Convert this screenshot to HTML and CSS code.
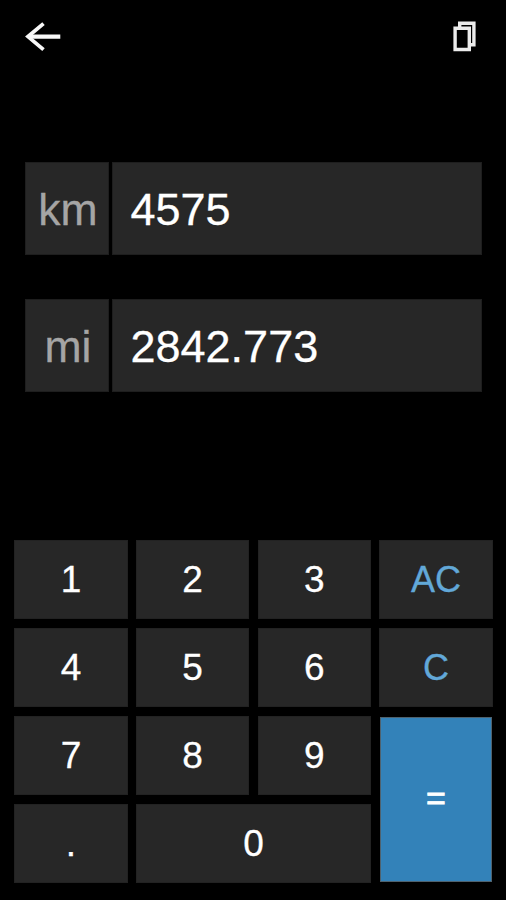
FILE: index.html
```html
<!DOCTYPE html>
<html lang="en">

<head>
    <meta charset="UTF-8">
    <meta name="viewport" content="width=device-width, initial-scale=1.0">
    <title>Unit Converter</title>
    <link rel="stylesheet" href="styles.css">
</head>

<body>
    <div class="app">
        <header class="topbar">
            <button class="icon-btn" aria-label="Back">
                <svg width="36" height="30" viewBox="0 0 36 30" fill="none" stroke="#f8f8f8">
                    <path d="M35.3 14.6H3" stroke-width="4.4" />
                    <path d="M18.5 1.6L3 14.6l15.5 13" stroke-width="3.8" />
                </svg>
            </button>
            <button class="icon-btn" aria-label="Copy">
                <svg width="24" height="31" viewBox="0 0 24 31" fill="none" stroke="#ececec" stroke-width="3.4">
                    <path d="M6.7 6V2.3h14.2v21.5H18" />
                    <path d="M2.1 7.3h14.2v21.2H2.1z" />
                </svg>
            </button>
        </header>

        <main class="fields">
            <div class="field">
                <div class="unit">km</div>
                <div class="value">4575</div>
            </div>
            <div class="field">
                <div class="unit">mi</div>
                <div class="value">2842.773</div>
            </div>
        </main>

        <div class="keypad">
            <button class="key">1</button>
            <button class="key">2</button>
            <button class="key">3</button>
            <button class="key clear">AC</button>
            <button class="key">4</button>
            <button class="key">5</button>
            <button class="key">6</button>
            <button class="key clear">C</button>
            <button class="key">7</button>
            <button class="key">8</button>
            <button class="key">9</button>
            <button class="key equals">=</button>
            <button class="key">.</button>
            <button class="key zero">0</button>
        </div>
    </div>
</body>

</html>
```

FILE: styles.css
```css
* {
    box-sizing: border-box;
}

body {
    margin: 0;
    background-color: #000;
    color: #fff;
    font-family: "Liberation Sans", Arial, sans-serif;
}

.app {
    display: flex;
    flex-direction: column;
    justify-content: space-between;
    height: 900px;
    padding-bottom: 17.3px;
    overflow: hidden;
}

.topbar {
    display: flex;
    justify-content: space-between;
    align-items: center;
    height: 73px;
    padding: 0 29px 0 25px;
}

.icon-btn {
    padding: 0;
    border: none;
    background: none;
    cursor: pointer;
}

.icon-btn svg {
    display: block;
}

.fields {
    display: flex;
    flex-direction: column;
    gap: 44px;
    flex: 1;
    padding: 89px 24px 0 25px;
}

.field {
    display: flex;
    gap: 3px;
    height: 93px;
    font-size: 45px;
    line-height: 93px;
}

.unit {
    width: 84px;
    padding-left: 2px;
    text-align: center;
    color: #a5a5a5;
    background-color: #272727;
    border: 1px solid #1e1e1e;
    font-size: 44.5px;
    -webkit-text-stroke: 0.3px #a5a5a5;
}

.value {
    flex: 1;
    padding-left: 17.5px;
    background-color: #272727;
    border: 1px solid #1e1e1e;
    -webkit-text-stroke: 0.3px #fff;
}

.keypad {
    display: grid;
    grid-template-columns: repeat(4, 1fr);
    grid-auto-rows: 79px;
    gap: 8.8px 8.4px;
    padding: 0 13.3px 0 14.3px;
}

.key {
    padding: 1px 0 0;
    border: 1px solid #222;
    background-color: #272727;
    color: #fff;
    font-family: inherit;
    font-size: 37px;
    -webkit-text-stroke: 0.3px #fff;
    cursor: pointer;
}

.clear {
    color: #62a8d8;
    font-size: 36px;
    -webkit-text-stroke: 0.3px #62a8d8;
}

.equals {
    grid-row: span 2;
    margin: 1px;
    padding-bottom: 3px;
    border: 1px solid #4f626e;
    background-color: #3382b9;
    font-size: 34px;
    -webkit-text-stroke: 0.8px #fff;
}

.zero {
    grid-column: span 2;
}
```
